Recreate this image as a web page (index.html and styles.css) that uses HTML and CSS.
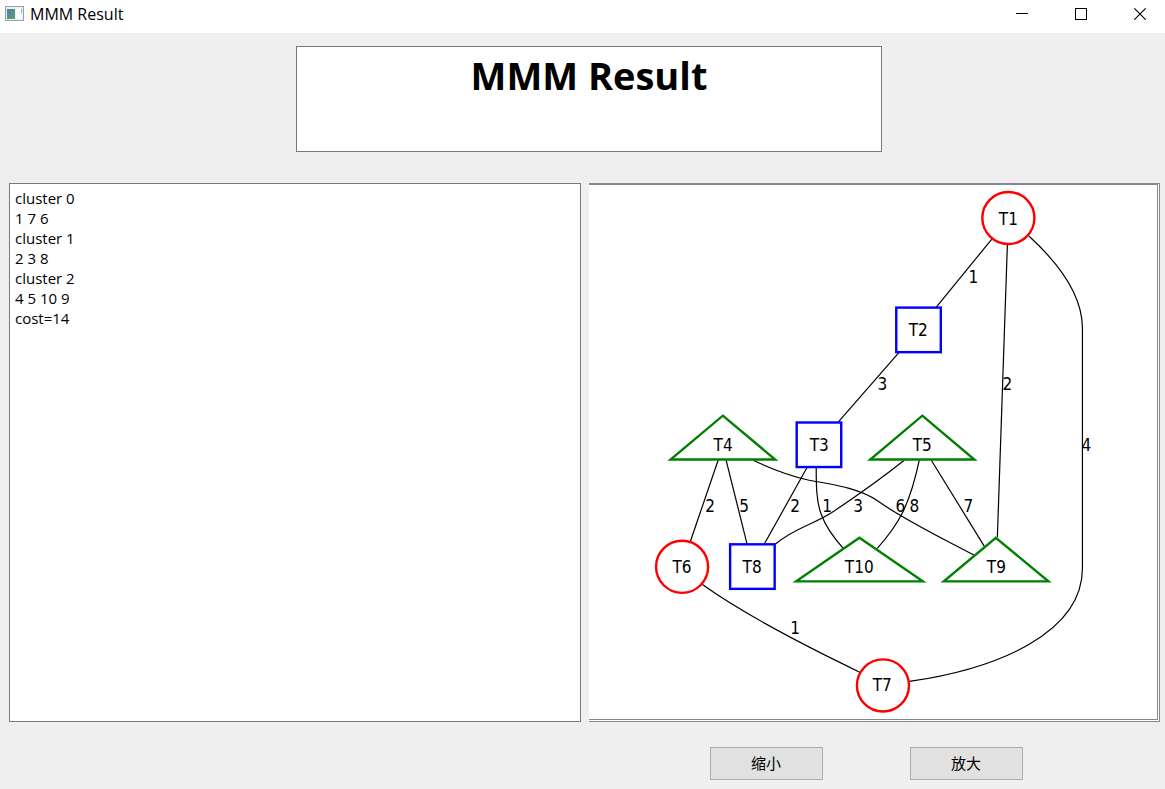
FILE: index.html
```html
<!DOCTYPE html>
<html lang="zh">
<head>
<meta charset="utf-8">
<title>MMM Result</title>
<link rel="stylesheet" href="styles.css">
</head>
<body>
<header class="titlebar">
  <svg class="app-icon" width="19" height="16" viewBox="0 0 19 16" aria-hidden="true">
    <defs>
      <linearGradient id="screen" x1="0" y1="0" x2="1" y2="1">
        <stop offset="0" stop-color="#4a7fa8"/><stop offset="1" stop-color="#56a873"/>
      </linearGradient>
      <linearGradient id="side" x1="0" y1="0" x2="0" y2="1">
        <stop offset="0" stop-color="#5f9f8c"/><stop offset="1" stop-color="#e4f0ea"/>
      </linearGradient>
    </defs>
    <rect x="0.5" y="0.5" width="18" height="14" fill="#eef1f3" stroke="#9aa0a8"/>
    <rect x="2" y="3" width="8" height="10" fill="url(#screen)"/>
    <rect x="11" y="3" width="6" height="10" fill="#fff"/>
    <rect x="16" y="3" width="1" height="6" fill="url(#side)"/>
  </svg>
  <span class="caption">MMM Result</span>
  <div class="window-controls">
    <button class="control" aria-label="Minimize"><svg width="12" height="12" viewBox="0 0 12 12"><path d="M0 5.5H12" stroke="#000"/></svg></button>
    <button class="control" aria-label="Maximize"><svg width="12" height="12" viewBox="0 0 12 12"><rect x="0.5" y="0.5" width="11" height="11" fill="none" stroke="#000"/></svg></button>
    <button class="control" aria-label="Close"><svg width="12" height="12" viewBox="0 0 12 12"><path d="M0.3 0.3L11.7 11.7M11.7 0.3L0.3 11.7" stroke="#000" stroke-width="1.1"/></svg></button>
  </div>
</header>
<main class="content">
  <div class="heading-box"><h1 class="heading">MMM Result</h1></div>
  <div class="panels">
    <textarea class="output" aria-label="Clusters" readonly>cluster 0
1 7 6
cluster 1
2 3 8
cluster 2
4 5 10 9
cost=14</textarea>
    <div class="graph-view">
      <svg class="graph" viewBox="589 185 568 534" role="img" aria-label="Cluster graph">
        <g class="edges">
          <path d="M991.500 239L936 307"/>
          <path d="M1007 245L997 537"/>
          <path d="M1028.500 236C1058 263 1082 295 1082 328V568C1082 632 999 668 909 681"/>
          <path d="M899 352L838 422"/>
          <path d="M718 460L690 542"/>
          <path d="M726 460L747 544"/>
          <path d="M753 460C772 469 791 476 809 480C838 485 861 489 878 501C903 519 938 536 974 555"/>
          <path d="M807 467L764 544"/>
          <path d="M816 467C816 484 816 501 821 514C826 528 834 538 843 548"/>
          <path d="M904 460C880 479 856 496 832 512C814 524 793 528 775 544"/>
          <path d="M919 460C915 479 911 494 903 511C896 525 887 537 877 548"/>
          <path d="M931 460L984 546"/>
          <path d="M702 584C745 615 806 646 860 672"/>
        </g>
        <g class="circles">
          <circle cx="1008" cy="218" r="26"/>
          <circle cx="682" cy="566.500" r="26"/>
          <circle cx="882.700" cy="685" r="26"/>
        </g>
        <g class="squares">
          <rect x="896" y="307.500" width="44.500" height="44.500"/>
          <rect x="796.500" y="422.300" width="44.500" height="44.500"/>
          <rect x="730" y="544" width="44.500" height="44.500"/>
        </g>
        <g class="triangles">
          <path d="M722.700 415.500L775 459.300H670.500Z"/>
          <path d="M922 415.500L974 459.300H870Z"/>
          <path d="M859.200 537.500L922.500 581H796Z"/>
          <path d="M995.500 537.500L1048 581H943.500Z"/>
        </g>
        <g class="labels">
          <text x="1008" y="225">T1</text>
          <text x="918" y="336">T2</text>
          <text x="819" y="451">T3</text>
          <text x="723" y="451">T4</text>
          <text x="922" y="451">T5</text>
          <text x="682" y="573">T6</text>
          <text x="882" y="691">T7</text>
          <text x="752" y="573">T8</text>
          <text x="996" y="573">T9</text>
          <text x="859" y="573">T10</text>
          <text x="973" y="283">1</text>
          <text x="882" y="390">3</text>
          <text x="1007" y="390">2</text>
          <text x="1086" y="451">4</text>
          <text x="710" y="512">2</text>
          <text x="744" y="512">5</text>
          <text x="795" y="512">2</text>
          <text x="827" y="512">1</text>
          <text x="858" y="512">3</text>
          <text x="900" y="512">6</text>
          <text x="914" y="512">8</text>
          <text x="968" y="512">7</text>
          <text x="795" y="634">1</text>
        </g>
      </svg>
    </div>
  </div>
  <div class="actions">
    <button class="zoom-button">缩小</button>
    <button class="zoom-button">放大</button>
  </div>
</main>
</body>
</html>
```
FILE: styles.css
```css
* {
  box-sizing: border-box;
}

body {
  display: flex;
  flex-direction: column;
  min-height: 100vh;
  margin: 0;
  background: #efefef;
  color: #000;
  font-family: "Open Sans", "Noto Sans CJK SC", sans-serif;
  font-size: 15px;
}

.titlebar {
  display: flex;
  align-items: center;
  height: 33px;
  padding: 0 19px 5px 5px;
  background: #fff;
}

.app-icon {
  margin-right: 6px;
}

.caption {
  font-size: 16px;
  line-height: 20px;
}

.window-controls {
  display: flex;
  gap: 47px;
  margin-left: auto;
}

.control {
  display: flex;
  padding: 0;
  border: 0;
  background: none;
}

.content {
  display: flex;
  flex: 1;
  flex-direction: column;
  padding: 13px 5px 9px 9px;
}

.heading-box {
  height: 106px;
  margin: 0 278px 31px 287px;
  padding-top: 4px;
  border: 1px solid #7a7a7a;
  background: #fff;
}

.heading {
  margin: 0;
  font-size: 38px;
  font-weight: 700;
  line-height: 48px;
  text-align: center;
}

.panels {
  display: grid;
  flex: 1;
  grid-template-columns: 1fr 1fr;
  gap: 8px;
}

.output {
  width: 100%;
  padding: 4px 5px;
  border: 1px solid #7a7a7a;
  border-radius: 0;
  outline: 0;
  background: #fff;
  color: #000;
  font: inherit;
  line-height: 20px;
  resize: none;
}

.graph-view {
  display: flex;
  min-height: 0;
  border-top: 2px solid #828790;
  border-right: 3px double #828790;
  border-bottom: 3px double #828790;
  background: #fff;
}

.graph {
  width: 100%;
}

.edges {
  fill: none;
  stroke: #000;
  stroke-width: 1.2;
}

.circles,
.squares,
.triangles {
  fill: none;
  stroke-width: 2.4;
}

.circles {
  stroke: #f00;
}

.squares {
  stroke: #00f;
}

.triangles {
  stroke: #008000;
}

.labels {
  font-family: "DejaVu Sans Condensed", "DejaVu Sans", sans-serif;
  font-size: 17px;
  text-anchor: middle;
}

.actions {
  display: grid;
  grid-template-columns: 113px 113px;
  gap: 87px;
  margin-top: 25px;
  margin-left: calc(50% + 125px);
}

.zoom-button {
  height: 33px;
  padding: 0 0 2px;
  border: 1px solid #adadad;
  background: #e1e1e1;
  color: #000;
  font: inherit;
}
```
